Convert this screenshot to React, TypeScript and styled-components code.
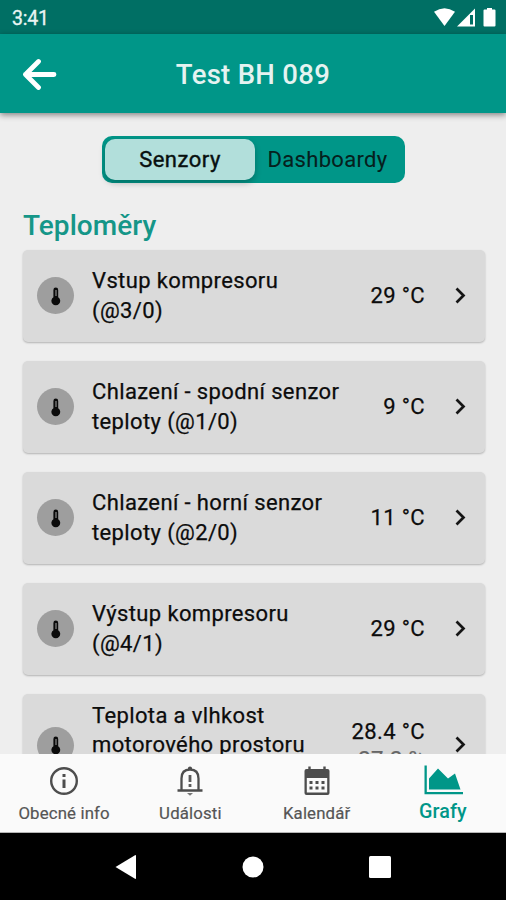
import React from "react";
import styled, { createGlobalStyle } from "styled-components";

const Global = createGlobalStyle`
  * { box-sizing: border-box; }
  body { margin: 0; font-family: Roboto, sans-serif; }
  svg { display: block; flex: none; }
`;

const Screen = styled.div`
  width: 506px;
  height: 900px;
  display: flex;
  flex-direction: column;
  overflow: hidden;
  background: #eeeeee;
`;

const StatusBar = styled.div`
  height: 34px;
  flex: none;
  display: flex;
  align-items: center;
  justify-content: space-between;
  padding: 2px 9px 0 12px;
  background: #006f64;
  color: #e9f5f3;
  font-size: 19.5px;
  font-weight: 400;
  letter-spacing: -0.2px;
  -webkit-text-stroke: 0.3px currentColor;
`;

const AppBar = styled.header`
  height: 79px;
  flex: none;
  display: grid;
  grid-template-columns: 79px 1fr 79px;
  align-items: center;
  justify-items: center;
  padding-top: 1px;
  background: #009688;
  box-shadow: 0 2px 6px rgba(0, 0, 0, 0.45);
  z-index: 1;
`;

const Title = styled.h1`
  margin: 1px 0 0;
  font-size: 27.5px;
  line-height: 32px;
  font-weight: 500;
  letter-spacing: 0.3px;
  color: #e5f3f1;
  white-space: nowrap;
`;

const Content = styled.main`
  flex: 1;
  min-height: 0;
  overflow: hidden;
  padding: 23px 21px 0 23px;
`;

const Segmented = styled.div`
  width: 303px;
  height: 47px;
  margin: 0 auto 0 79px;
  padding: 3px;
  display: grid;
  grid-template-columns: 150px 1fr;
  background: #009688;
  border-radius: 10px;
`;

const Segment = styled.button<{ $active?: boolean }>`
  border: 0;
  padding: ${(p) => (p.$active ? "0" : "0 2px 0 0")};
  border-radius: 10px;
  font: 400 22px/41px Roboto, sans-serif;
  letter-spacing: ${(p) => (p.$active ? 0.5 : 0.3)}px;
  -webkit-text-stroke: ${(p) => (p.$active ? 0.4 : 0.1)}px currentColor;
  color: ${(p) => (p.$active ? "#08100f" : "#06201d")};
  background: ${(p) => (p.$active ? "#b2dfdb" : "transparent")};
  box-shadow: ${(p) => (p.$active ? "0 3px 6px rgba(0,0,0,.25)" : "none")};
`;

const Heading = styled.h2`
  margin: 26px 0 8px;
  font-size: 28px;
  line-height: 33px;
  font-weight: 500;
  letter-spacing: 0.05px;
  color: #159688;
`;

const List = styled.div`
  display: grid;
  gap: 19px;
`;

const Card = styled.div<{ $tall?: boolean }>`
  height: ${(p) => (p.$tall ? 103 : 92)}px;
  display: grid;
  grid-template-columns: 37px 1fr auto 13px;
  align-items: center;
  padding: 0 18px 1px 14px;
  border-radius: 5px;
  background: #dadada;
  box-shadow: 0 1px 2px rgba(0, 0, 0, 0.25);
  font-size: 22px;
  line-height: 29.5px;
  letter-spacing: 0.37px;
  color: #0c0c0c;
  -webkit-text-stroke: 0.25px currentColor;
`;

const Badge = styled.div`
  width: 37px;
  height: 37px;
  border-radius: 50%;
  background: #9e9e9e;
  display: grid;
  place-items: center;
`;

const Name = styled.div`
  padding-left: 18px;
  white-space: pre-line;
`;

const Values = styled.div`
  text-align: right;
  padding: 1px 29px 0 0;
`;

const Secondary = styled.div`
  margin-top: -1px;
  color: #666666;
`;

const BottomNav = styled.nav`
  height: 79px;
  flex: none;
  display: grid;
  grid-template-columns: repeat(4, 1fr);
  padding-left: 1px;
  background: #fafafa;
  border-bottom: 1px solid #b5b5b5;
`;

const NavItem = styled.div<{ $active?: boolean }>`
  display: flex;
  flex-direction: column;
  align-items: center;
  padding-top: ${(p) => (p.$active ? 11 : 12)}px;
  gap: ${(p) => (p.$active ? 2 : 6)}px;
  color: ${(p) => (p.$active ? "#009688" : "#555555")};
  font-size: ${(p) => (p.$active ? 19.7 : 16.8)}px;
  line-height: ${(p) => (p.$active ? 30 : 22)}px;
  font-weight: ${(p) => (p.$active ? 500 : 400)};
  letter-spacing: 0.15px;
  -webkit-text-stroke: ${(p) => (p.$active ? 0 : 0.2)}px currentColor;
  white-space: nowrap;
`;

const SystemNav = styled.div`
  height: 67px;
  flex: none;
  display: grid;
  grid-template-columns: repeat(3, 127px);
  justify-content: center;
  align-items: center;
  justify-items: center;
  background: #000;
`;

const StatusIcons = () => (
  <svg width="64" height="22" viewBox="433 7 64 22" fill="#fff">
    <path d="M434 11.8Q444.500 4.800 455 11.800L444.500 26Z" />
    <path fillRule="evenodd" d="M475 8.500V26.500H457ZM470 15V24.500H473V15Z" />
    <path d="M487 8h5v1.500h2.500q1 0 1 1v15q0 1-1 1h-10q-1 0-1-1v-15q0-1 1-1h2.500z" />
  </svg>
);

const BackIcon = () => (
  <svg width="36" height="32" viewBox="0.5 -0.5 36 32" fill="none" stroke="#fff" strokeWidth="4.800" strokeLinecap="round" strokeLinejoin="round">
    <path d="M32.500 16H4M17 3 4 16l13 13" />
  </svg>
);

const Thermometer = () => (
  <svg width="12" height="20" viewBox="0 0 12 20">
    <path d="M3.400 4a2.400 2.400 0 0 1 4.800 0v7.200a4.400 4.400 0 1 1-4.800 0z" fill="#0a0a0a" />
    <path d="M6 4v6" stroke="#777" strokeWidth="1.400" />
  </svg>
);

const Chevron = () => (
  <svg width="13" height="18" viewBox="0 0.5 13 18" fill="none" stroke="#151515" strokeWidth="2.700">
    <path d="M2.500 2 9.500 9l-7 7" />
  </svg>
);

const InfoIcon = () => (
  <svg width="30" height="30" viewBox="0 0 30 30" fill="none" stroke="#4d4d4d">
    <circle cx="15" cy="15" r="12.800" strokeWidth="2.400" />
    <path d="M15 8v3M15 13.500v8.500" strokeWidth="3" />
  </svg>
);

const BellIcon = () => (
  <svg width="30" height="30" viewBox="0 0 30 30">
    <path d="M13 3V2q0-1.500 2-1.500T17 2v1z" fill="#4d4d4d" />
    <path d="M6.500 24V12.500q0-9 8.500-9t8.500 9V24M2.500 24.500h25" fill="none" stroke="#4d4d4d" strokeWidth="2.300" />
    <path d="M15 9v7M15 18v3" stroke="#5a5a5a" strokeWidth="2.800" />
    <path d="M12 27h6l-3 2.800z" fill="#777" />
  </svg>
);

const CalendarIcon = () => (
  <svg width="30" height="30" viewBox="0 0 30 30">
    <path d="M4.500 3h21q2 0 2 2v22q0 2-2 2h-21q-2 0-2-2V5q0-2 2-2z" fill="#4d4d4d" />
    <path d="M4.800 12h20.400v14.500H4.800z" fill="#fafafa" />
    <path d="M7.500 0.500v5M22.500 0.500v5" stroke="#4d4d4d" strokeWidth="2.400" />
    <path d="M7.500 16.500h15M7.500 22h15" stroke="#4d4d4d" strokeWidth="3" strokeDasharray="3 3" />
  </svg>
);

const ChartIcon = () => (
  <svg width="44" height="30" viewBox="-3 -0.5 44 30" fill="#009688">
    <path d="M0.500 0H2.800V26.500H39V28.800H0.500Z" />
    <path d="M5 24V13L14 3l10 10 7-5 5.500 16z" />
  </svg>
);

const sensors = [
  { name: "Vstup kompresoru\n(@3/0)", value: "29 °C" },
  { name: "Chlazení - spodní senzor\nteploty (@1/0)", value: "9 °C" },
  { name: "Chlazení - horní senzor\nteploty (@2/0)", value: "11 °C" },
  { name: "Výstup kompresoru\n(@4/1)", value: "29 °C" },
  { name: "Teplota a vlhkost\nmotorového prostoru\n(@5/0)", value: "28.4 °C", secondary: "27.2 %" },
];

export default function App() {
  return (
    <Screen>
      <Global />
      <StatusBar>
        3:41
        <StatusIcons />
      </StatusBar>
      <AppBar>
        <BackIcon />
        <Title>Test BH 089</Title>
      </AppBar>
      <Content>
        <Segmented>
          <Segment $active>Senzory</Segment>
          <Segment>Dashboardy</Segment>
        </Segmented>
        <Heading>Teploměry</Heading>
        <List>
          {sensors.map((s) => (
            <Card key={s.name} $tall={!!s.secondary}>
              <Badge>
                <Thermometer />
              </Badge>
              <Name>{s.name}</Name>
              <Values>
                {s.value}
                {s.secondary && <Secondary>{s.secondary}</Secondary>}
              </Values>
              <Chevron />
            </Card>
          ))}
        </List>
      </Content>
      <BottomNav>
        <NavItem>
          <InfoIcon />
          Obecné info
        </NavItem>
        <NavItem>
          <BellIcon />
          Události
        </NavItem>
        <NavItem>
          <CalendarIcon />
          Kalendář
        </NavItem>
        <NavItem $active>
          <ChartIcon />
          Grafy
        </NavItem>
      </BottomNav>
      <SystemNav>
        <svg width="22" height="26" viewBox="0 0 22 26" fill="#fff">
          <path d="M0.500 13 20 1.200q1-.5 1 .6v22.400q0 1.100-1 .6z" />
        </svg>
        <svg width="22" height="22" viewBox="0 0 22 22" fill="#fff">
          <circle cx="11" cy="11" r="10.500" />
        </svg>
        <svg width="22" height="22" viewBox="0 0 22 22" fill="#fff">
          <rect width="22" height="22" rx="1.500" />
        </svg>
      </SystemNav>
    </Screen>
  );
}
